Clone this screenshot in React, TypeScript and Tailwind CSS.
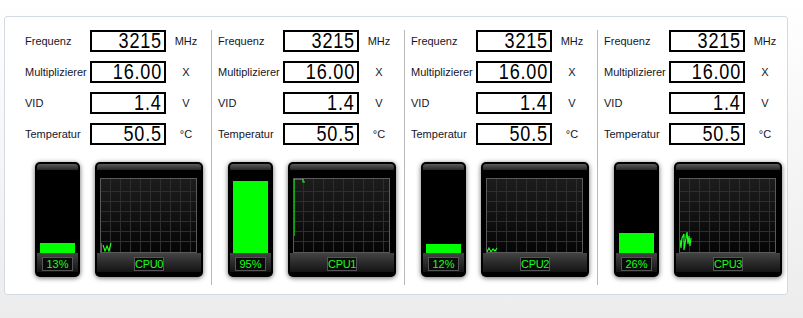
const rows = [
  { label: 'Frequenz', value: '3215', unit: 'MHz' },
  { label: 'Multiplizierer', value: '16.00', unit: 'X' },
  { label: 'VID', value: '1.4', unit: 'V' },
  { label: 'Temperatur', value: '50.5', unit: '°C' },
];

const cpus = [
  { name: 'CPU0', load: 13, trace: ['1,65 1,75', '3,67 5,73 7,68 9,73 11,65'] },
  { name: 'CPU1', load: 95, trace: ['1,58 1,1 10,1 10,4 12,4'] },
  { name: 'CPU2', load: 12, trace: ['0,68 1,74 3,70 5,74 7,71 9,73 11,70'] },
  {
    name: 'CPU3',
    load: 26,
    trace: ['0,72 1,62 2,70 3,60 5,56 5,72 7,60 8,54 9,66 10,58 11,68 12,60'],
  },
];

const vLines = [10, 20, 30, 40, 50, 60, 70, 80, 90];
const hLines = [13, 23, 33, 43, 53, 63];

function ReadoutRow({ label, value, unit }: { label: string; value: string; unit: string }) {
  return (
    <div className="flex items-center h-[22px]">
      <span className="w-[65px] text-[11px] text-[#15152a] whitespace-nowrap">{label}</span>
      <div className="w-[76px] h-[22px] border-2 border-black bg-white flex items-center justify-end pr-[2px]">
        <span className="inline-block text-[22px] leading-[18px] text-black scale-x-[0.82] origin-right tracking-[1px]">
          {value}
        </span>
      </div>
      <span className="w-[40px] text-center text-[11px] text-[#15152a]">{unit}</span>
    </div>
  );
}

function LoadGauge({ load }: { load: number }) {
  return (
    <div className="w-[45px] h-[115px] rounded-[5px] bg-black p-[2px] flex flex-col shadow-[0_1px_5px_rgba(0,0,0,0.6)]">
      <div className="h-[6px] rounded-t-[3px] bg-gradient-to-b from-[#5c5c5c] to-[#262626]" />
      <div className="flex-1 flex flex-col justify-end px-[3px]">
        <div className="bg-[#00ff00]" style={{ height: Math.round(load * 0.76) }} />
      </div>
      <div className="h-[19px] bg-gradient-to-b from-[#444] to-[#141414] flex justify-center pt-[4px]">
        <div className="w-[31px] h-[14px] border border-[#555] bg-[#0a0a0a] text-[#19ff19] text-[11px] leading-[12px] text-center">
          {load}%
        </div>
      </div>
      <div className="h-[3px]" />
    </div>
  );
}

function HistoryGraph({ name, trace }: { name: string; trace: string[] }) {
  return (
    <div className="w-[108px] h-[115px] rounded-[5px] bg-black p-[2px] flex flex-col shadow-[0_1px_5px_rgba(0,0,0,0.6)]">
      <div className="h-[6px] rounded-t-[3px] bg-gradient-to-b from-[#5c5c5c] to-[#262626]" />
      <div className="flex-1 pt-[8px] pl-[3px] pr-[4px]">
        <svg width="97" height="75" viewBox="0 0 97 75" className="block">
          <defs>
            <linearGradient id={`g-${name}`} x1="0" y1="0" x2="0" y2="1">
              <stop offset="0" stopColor="#1d1d1d" />
              <stop offset="1" stopColor="#050505" />
            </linearGradient>
          </defs>
          <rect x="0" y="0" width="97" height="75" fill={`url(#g-${name})`} />
          {vLines.map((x) => (
            <line key={`v${x}`} x1={x + 0.5} y1="0" x2={x + 0.5} y2="75" stroke="#2e2e2e" />
          ))}
          {hLines.map((y) => (
            <line key={`h${y}`} x1="0" y1={y + 0.5} x2="97" y2={y + 0.5} stroke="#2e2e2e" />
          ))}
          {trace.map((pts, i) => (
            <polyline key={i} points={pts} fill="none" stroke="#19ff19" strokeWidth="1.2" />
          ))}
          <rect x="0.5" y="0.5" width="96" height="74" fill="none" stroke="#5a5a5a" />
        </svg>
      </div>
      <div className="h-[19px] bg-gradient-to-b from-[#444] to-[#141414] flex justify-center pt-[4px]">
        <div className="w-[30px] h-[14px] border border-[#555] bg-[#0a0a0a] text-[#19ff19] text-[11px] leading-[12px] text-center tracking-[-0.3px]">
          {name}
        </div>
      </div>
      <div className="h-[3px]" />
    </div>
  );
}

function CpuColumn({ cpu, last }: { cpu: (typeof cpus)[number]; last: boolean }) {
  return (
    <div
      className={`h-[255px] flex flex-col pl-[6px] ${
        last ? 'flex-1' : 'w-[193px] shrink-0 border-r border-[#b8b8b8]'
      }`}
    >
      <div className="flex flex-col gap-[9px]">
        {rows.map((r) => (
          <ReadoutRow key={r.label} {...r} />
        ))}
      </div>
      <div className="flex gap-[15px] mt-[17px] ml-[10px]">
        <LoadGauge load={cpu.load} />
        <HistoryGraph name={cpu.name} trace={cpu.trace} />
      </div>
    </div>
  );
}

export default function App() {
  return (
    <div className="w-[803px] h-[318px] bg-gradient-to-b from-white to-[#ececec] pt-[16px] pl-[4px] font-['Liberation_Sans',Arial,sans-serif]">
      <div className="w-[784px] h-[279px] rounded-[3px] border border-[#d3dae3] bg-white pt-[13px] pl-[14px] flex">
        {cpus.map((cpu, i) => (
          <CpuColumn key={cpu.name} cpu={cpu} last={i === cpus.length - 1} />
        ))}
      </div>
    </div>
  );
}
